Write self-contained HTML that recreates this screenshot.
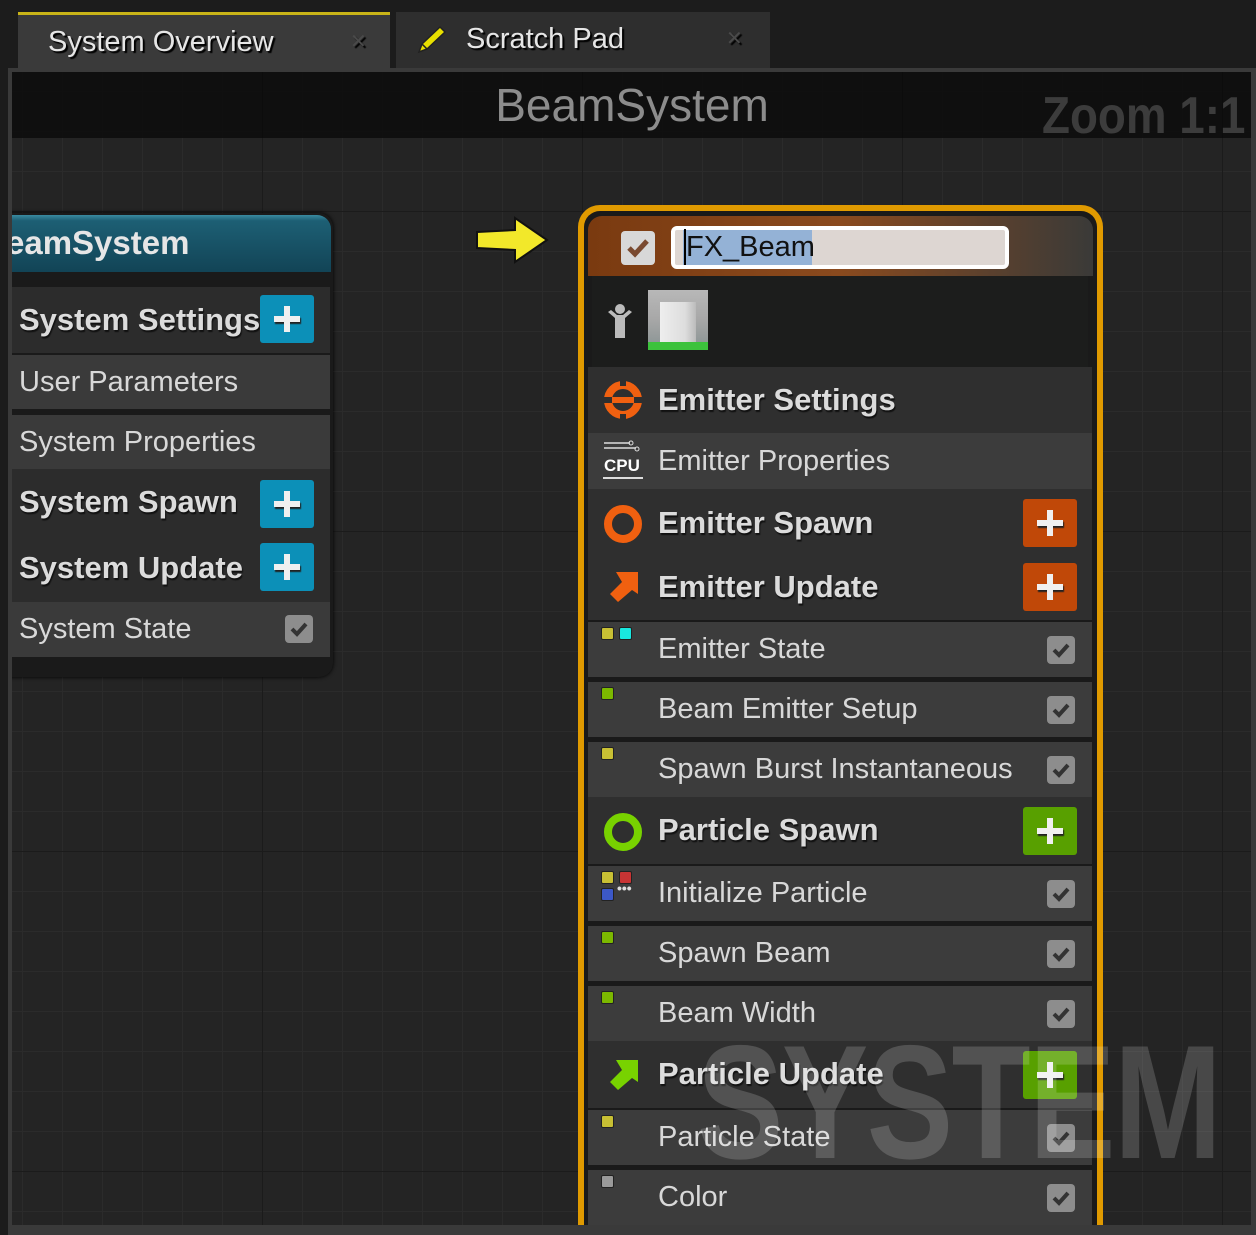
<!DOCTYPE html>
<html><head><meta charset="utf-8"><style>
*{margin:0;padding:0;box-sizing:border-box}
body{width:1256px;height:1235px;overflow:hidden;background:#1c1c1c;font-family:"Liberation Sans",sans-serif;position:relative}
.a{position:absolute}
.tab{position:absolute;top:12px;height:56px;font-size:29px;color:#e6e6e6;text-shadow:2px 2px 1px #000;line-height:54px}
#graph{position:absolute;left:12px;top:72px;width:1239px;height:1153px;background-color:#242424;
background-image:linear-gradient(90deg,#1b1b1b 1px,transparent 1px),linear-gradient(#1b1b1b 1px,transparent 1px),linear-gradient(90deg,#2b2b2b 1px,transparent 1px),linear-gradient(#2b2b2b 1px,transparent 1px);
background-size:320px 320px,320px 320px,40px 40px,40px 40px;background-position:250px 0,0 139px,10px 0,0 19px;overflow:hidden}
.row{position:absolute;display:flex;align-items:center;color:#e0e0e0;white-space:nowrap}
.b{font-weight:bold;font-size:31px;color:#dcdcdc;text-shadow:1px 2px 1px #111}
.n{font-size:29px;color:#d8d8d8}
.plus{position:absolute;width:54px;height:48px;border-radius:3px;display:flex;align-items:center;justify-content:center}
.plus:before{content:"";position:absolute;width:26px;height:6px;background:#f0f0f0;box-shadow:1px 2px 1px #222}
.plus:after{content:"";position:absolute;width:6px;height:26px;background:#f0f0f0}
.cb{position:absolute;width:28px;height:28px;border-radius:4px;background:#8d8d8d}
.cb svg{position:absolute;left:4px;top:4px}
.sq{position:absolute;width:13px;height:13px;border-radius:2px;border:1px solid #222}
</style></head><body>
<div class="tab" style="left:18px;width:372px;background:#3a3a3a;border-top:3px solid #c9b418;padding-left:30px">System Overview<span style="position:absolute;left:332px;color:#4a4a4a;font-size:20px">✕</span></div>
<div class="tab" style="left:396px;width:374px;background:#2e2e2e;padding-left:70px">
<svg class="a" style="left:18px;top:12px" width="34" height="32" viewBox="0 0 34 32"><path d="M5 28 L8 20 L26 3 L31 8 L13 25 Z" fill="#e8e000" stroke="#222" stroke-width="1.5"/><path d="M8 20 L13 25" stroke="#222" stroke-width="1.5"/></svg>
Scratch Pad<span style="position:absolute;left:330px;color:#4a4a4a;font-size:20px">✕</span></div>
<div class="a" style="left:8px;top:68px;width:1248px;height:1167px;background:#3a3a3a"></div>
<div id="graph">
 <div class="a" style="left:0;top:0;width:1239px;height:66px;background:rgba(8,8,8,.75)"></div>
 <div class="a" style="left:0;top:6px;width:1240px;text-align:center;font-size:46px;color:#8c8c8c">BeamSystem</div>
 <div class="a" style="left:1030px;top:14px;font-size:52px;font-weight:bold;color:#3c3c3c;white-space:nowrap;transform:scaleX(.88);transform-origin:0 0">Zoom 1:1</div>
 <div class="a" style="left:-20px;top:141px;width:341px;height:464px;background:#1a1a1a;border-radius:14px;box-shadow:0 0 4px #000"></div>
 <div class="a" style="left:-20px;top:143px;width:339px;height:57px;border-radius:14px 14px 0 0;background:linear-gradient(180deg,#3a8aa0 0,#1d5f74 10%,#124456 100%)"></div>
 <div class="a" style="left:-6px;top:152px;font-size:33px;font-weight:bold;color:#e6e6e6">eamSystem</div>
 <div class="a" style="left:0;top:215px;width:318px;height:66px;background:#2c2c2c"></div>
 <div class="row b" style="left:7px;top:215px;height:66px">System Settings</div>
 <div class="plus" style="left:248px;top:223px;background:#0c90b8"></div>
 <div class="a" style="left:0;top:283px;width:318px;height:54px;background:#3a3a3a"></div>
 <div class="row n" style="left:7px;top:283px;height:54px">User Parameters</div>
 <div class="a" style="left:0;top:343px;width:318px;height:54px;background:#3a3a3a"></div>
 <div class="row n" style="left:7px;top:343px;height:54px">System Properties</div>
 <div class="a" style="left:0;top:397px;width:318px;height:133px;background:#2c2c2c"></div>
 <div class="row b" style="left:7px;top:397px;height:66px">System Spawn</div>
 <div class="plus" style="left:248px;top:408px;background:#0c90b8"></div>
 <div class="row b" style="left:7px;top:463px;height:66px">System Update</div>
 <div class="plus" style="left:248px;top:471px;background:#0c90b8"></div>
 <div class="a" style="left:0;top:530px;width:318px;height:55px;background:#3a3a3a"></div>
 <div class="row n" style="left:7px;top:530px;height:55px">System State</div>
 <div class="cb" style="left:273px;top:543px"><svg width="20" height="20" viewBox="0 0 20 20"><path d="M3 10 L8 15 L17 5" fill="none" stroke="#333" stroke-width="4"/></svg></div>
 <svg class="a" style="left:463px;top:144px" width="76" height="48" viewBox="0 0 76 48"><path d="M2 16 L40 14 L40 2 L72 24 L40 46 L40 34 L2 32 Z" fill="#f2e82a" stroke="#111" stroke-width="2"/></svg>
 <div class="a" style="left:566px;top:133px;width:525px;height:1040px;border:6px solid #e09a00;border-bottom:none;border-radius:22px 22px 0 0;background:#1a1a1a"></div>
 <div class="a" style="left:576px;top:144px;width:505px;height:60px;border-radius:14px 14px 0 0;background:linear-gradient(90deg,#7a3a10,#8a4a1e 50%,#3a3a38)"></div>
 <div class="a" style="left:609px;top:159px;width:34px;height:34px;background:#d8d8d8;border-radius:4px"><svg width="34" height="34" viewBox="0 0 34 34"><path d="M8 17 L14 23 L26 10" fill="none" stroke="#7a4a30" stroke-width="5"/></svg></div>
 <div class="a" style="left:659px;top:154px;width:338px;height:43px;background:#ddd6d2;border:4px solid #fff;border-radius:6px"></div>
 <div class="a" style="left:671px;top:158px;height:35px;width:129px;background:#94b2d6"></div>
 <div class="a" style="left:672px;top:157px;width:2px;height:36px;background:#000"></div>
 <div class="a" style="left:674px;top:158px;font-size:29px;color:#111;line-height:35px">FX_Beam</div>
 <div class="a" style="left:580px;top:204px;width:496px;height:91px;background:#1c1d1c"></div>
 <svg class="a" style="left:594px;top:230px" width="28" height="40" viewBox="0 0 28 40"><circle cx="14" cy="7" r="5" fill="#bbb"/><path d="M2 10 L9 16 L9 36 L19 36 L19 16 L26 10 L23 8 L17 13 L11 13 L5 8 Z" fill="#bbb"/></svg>
 <div class="a" style="left:636px;top:218px;width:60px;height:52px;background:linear-gradient(#b8b8b8,#a8a8a8 55%,#909898)"></div>
 <div class="a" style="left:648px;top:230px;width:36px;height:40px;background:linear-gradient(90deg,#eee,#ddd 70%,#bbb)"></div>
 <div class="a" style="left:636px;top:270px;width:60px;height:8px;background:#3cc23c"></div>

 <div class="a" style="left:576px;top:295px;width:504px;height:66px;background:#2f2f2f"></div>
 <svg class="a" style="left:591px;top:308px" width="40" height="40" viewBox="0 0 40 40"><circle cx="20" cy="20" r="15" fill="none" stroke="#f06010" stroke-width="8"/><rect x="0" y="17" width="40" height="6" fill="#2f2f2f"/><rect x="9" y="17" width="22" height="6" fill="#f06010"/><rect x="17" y="0" width="6" height="6" fill="#2f2f2f"/><rect x="17" y="34" width="6" height="6" fill="#2f2f2f"/></svg>
 <div class="row b" style="left:646px;top:295px;height:66px">Emitter Settings</div>
 <div class="a" style="left:576px;top:361px;width:504px;height:56px;background:#3c3c3c"></div>
 <svg class="a" style="left:590px;top:368px" width="42" height="42" viewBox="0 0 42 42"><path d="M2 3 H28 M2 8 H34" stroke="#ddd" stroke-width="1.5"/><circle cx="29" cy="3" r="2" fill="none" stroke="#ddd"/><circle cx="35" cy="9" r="2" fill="none" stroke="#ddd"/><text x="2" y="31" font-family="Liberation Sans" font-weight="bold" font-size="17" fill="#fff">CPU</text><path d="M1 38 H41" stroke="#ddd" stroke-width="2"/></svg>
 <div class="row n" style="left:646px;top:361px;height:56px">Emitter Properties</div>
 <div class="a" style="left:576px;top:417px;width:504px;height:131px;background:#2f2f2f"></div>
 <svg class="a" style="left:591px;top:432px" width="40" height="40" viewBox="0 0 40 40"><circle cx="20" cy="20" r="15" fill="none" stroke="#f06010" stroke-width="8"/></svg>
 <div class="row b" style="left:646px;top:418px;height:66px">Emitter Spawn</div>
 <div class="plus" style="left:1011px;top:427px;background:#c04808"></div>
 <svg class="a" style="left:594px;top:496px" width="36" height="36" viewBox="0 0 36 36"><path d="M10 4 H32 V26 L26 22 L12 34 L4 26 L16 14 Z" fill="#f06010"/></svg>
 <div class="row b" style="left:646px;top:482px;height:66px">Emitter Update</div>
 <div class="plus" style="left:1011px;top:491px;background:#c04808"></div>

 <div class="a" style="left:576px;top:550px;width:504px;height:55px;background:#3c3c3c"></div>
 <div class="sq" style="left:589px;top:555px;background:#c8c034"></div><div class="sq" style="left:607px;top:555px;background:#18e8e0"></div>
 <div class="row n" style="left:646px;top:550px;height:55px">Emitter State</div>
 <div class="cb" style="left:1035px;top:564px"><svg width="20" height="20" viewBox="0 0 20 20"><path d="M3 10 L8 15 L17 5" fill="none" stroke="#333" stroke-width="4"/></svg></div>

 <div class="a" style="left:576px;top:610px;width:504px;height:55px;background:#3c3c3c"></div>
 <div class="sq" style="left:589px;top:615px;background:#7cb800"></div>
 <div class="row n" style="left:646px;top:610px;height:55px">Beam Emitter Setup</div>
 <div class="cb" style="left:1035px;top:624px"><svg width="20" height="20" viewBox="0 0 20 20"><path d="M3 10 L8 15 L17 5" fill="none" stroke="#333" stroke-width="4"/></svg></div>

 <div class="a" style="left:576px;top:670px;width:504px;height:55px;background:#3c3c3c"></div>
 <div class="sq" style="left:589px;top:675px;background:#c8c034"></div>
 <div class="row n" style="left:646px;top:670px;height:55px">Spawn Burst Instantaneous</div>
 <div class="cb" style="left:1035px;top:684px"><svg width="20" height="20" viewBox="0 0 20 20"><path d="M3 10 L8 15 L17 5" fill="none" stroke="#333" stroke-width="4"/></svg></div>

 <div class="a" style="left:576px;top:725px;width:504px;height:67px;background:#2f2f2f"></div>
 <svg class="a" style="left:591px;top:740px" width="40" height="40" viewBox="0 0 40 40"><circle cx="20" cy="20" r="15" fill="none" stroke="#78d200" stroke-width="8"/></svg>
 <div class="row b" style="left:646px;top:725px;height:66px">Particle Spawn</div>
 <div class="plus" style="left:1011px;top:735px;background:#58a000"></div>

 <div class="a" style="left:576px;top:794px;width:504px;height:55px;background:#3c3c3c"></div>
 <div class="sq" style="left:589px;top:799px;background:#c8c034"></div><div class="sq" style="left:607px;top:799px;background:#c83434"></div><div class="sq" style="left:589px;top:816px;background:#3c58c8"></div>
 <div class="a" style="left:605px;top:808px;color:#ddd;font-size:14px;font-weight:bold">•••</div>
 <div class="row n" style="left:646px;top:794px;height:55px">Initialize Particle</div>
 <div class="cb" style="left:1035px;top:808px"><svg width="20" height="20" viewBox="0 0 20 20"><path d="M3 10 L8 15 L17 5" fill="none" stroke="#333" stroke-width="4"/></svg></div>

 <div class="a" style="left:576px;top:854px;width:504px;height:55px;background:#3c3c3c"></div>
 <div class="sq" style="left:589px;top:859px;background:#7cb800"></div>
 <div class="row n" style="left:646px;top:854px;height:55px">Spawn Beam</div>
 <div class="cb" style="left:1035px;top:868px"><svg width="20" height="20" viewBox="0 0 20 20"><path d="M3 10 L8 15 L17 5" fill="none" stroke="#333" stroke-width="4"/></svg></div>

 <div class="a" style="left:576px;top:914px;width:504px;height:55px;background:#3c3c3c"></div>
 <div class="sq" style="left:589px;top:919px;background:#7cb800"></div>
 <div class="row n" style="left:646px;top:914px;height:55px">Beam Width</div>
 <div class="cb" style="left:1035px;top:928px"><svg width="20" height="20" viewBox="0 0 20 20"><path d="M3 10 L8 15 L17 5" fill="none" stroke="#333" stroke-width="4"/></svg></div>

 <div class="a" style="left:576px;top:969px;width:504px;height:67px;background:#2f2f2f"></div>
 <svg class="a" style="left:594px;top:984px" width="36" height="36" viewBox="0 0 36 36"><path d="M10 4 H32 V26 L26 22 L12 34 L4 26 L16 14 Z" fill="#78d200"/></svg>
 <div class="row b" style="left:646px;top:969px;height:66px">Particle Update</div>
 <div class="plus" style="left:1011px;top:979px;background:#58a000"></div>

 <div class="a" style="left:576px;top:1038px;width:504px;height:55px;background:#3c3c3c"></div>
 <div class="sq" style="left:589px;top:1043px;background:#c8c034"></div>
 <div class="row n" style="left:646px;top:1038px;height:55px">Particle State</div>
 <div class="cb" style="left:1035px;top:1052px"><svg width="20" height="20" viewBox="0 0 20 20"><path d="M3 10 L8 15 L17 5" fill="none" stroke="#333" stroke-width="4"/></svg></div>

 <div class="a" style="left:576px;top:1098px;width:504px;height:55px;background:#3c3c3c"></div>
 <div class="sq" style="left:589px;top:1103px;background:#9a9a9a"></div>
 <div class="row n" style="left:646px;top:1098px;height:55px">Color</div>
 <div class="cb" style="left:1035px;top:1112px"><svg width="20" height="20" viewBox="0 0 20 20"><path d="M3 10 L8 15 L17 5" fill="none" stroke="#333" stroke-width="4"/></svg></div>

 <div class="a" style="left:685px;top:950px;font-size:162px;font-weight:bold;color:rgba(255,255,255,.17);transform:scaleX(.8);transform-origin:0 0;line-height:1;letter-spacing:-2px;white-space:nowrap">SYSTEM</div>
</div>
</body></html>
